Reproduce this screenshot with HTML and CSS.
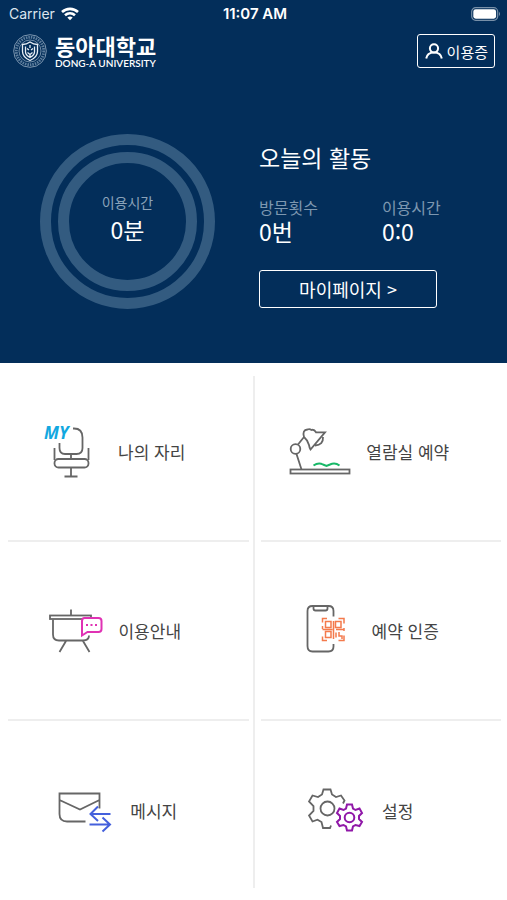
FILE: index.html
```html
<!DOCTYPE html>
<html lang="ko">
<head>
<meta charset="utf-8">
<meta name="viewport" content="width=device-width, initial-scale=1">
<title>동아대학교</title>
<link rel="stylesheet" href="styles.css">
</head>
<body>
<section class="hero">
  <div class="status">
    <div class="carrier">Carrier
      <svg width="18" height="14" viewBox="0 0 18 14" fill="none" stroke="#fff" stroke-width="2.6" aria-hidden="true">
        <path d="M1 5C5.5 .8 12.500 .8 17 5M4 8.300c3-2.700 7-2.700 10 0"/>
        <path d="M9 13.300 6.300 10.500q2.700-2 5.400 0z" fill="#fff" stroke="none"/>
      </svg>
    </div>
    <div class="clock">11:07 AM</div>
    <svg class="battery" width="30" height="14" viewBox="0 0 30 14" aria-hidden="true">
      <rect x=".7" y=".7" width="26" height="12.600" rx="4" fill="none" stroke="#7890a8" stroke-width="1.200"/>
      <rect x="2.300" y="2.300" width="22.800" height="9.400" rx="2.400" fill="#fff"/>
      <path d="M28 4.800q2 2.200 0 4.400z" fill="#7890a8"/>
    </svg>
  </div>
  <header class="header">
    <div class="brand">
      <svg width="34" height="34" viewBox="0 0 34 34" fill="none" stroke="#b9c9da" aria-hidden="true">
        <circle cx="17" cy="17" r="16.300" stroke="#8ba3ba" stroke-width=".9"/>
        <circle cx="17" cy="17" r="13.700" stroke="#5f7f9e" stroke-width="2.800" stroke-dasharray="1.500 1"/>
        <circle cx="17" cy="17" r="11" stroke="#8ba3ba" stroke-width=".8"/>
        <path d="M9.500 10.500q4 0 7.500-2.500 3.500 2.500 7.500 2.500v7q0 5.500-7.500 9-7.500-3.500-7.500-9z" stroke="#e7eef5" stroke-width="1.300"/>
        <path d="M12.500 12.500v5.500q0 3 4.500 5.500 4.500-2.500 4.500-5.500v-5.500M17 11v3M14 14.500l2 1.500M20 14.500l-2 1.500M14.500 18.500l2.500 2 2.500-2M17 20.500v3" stroke="#e7eef5" stroke-width="1.300"/>
      </svg>
      <div class="brand-name">
        <span class="brand-ko">동아대학교</span>
        <span class="brand-en">DONG-A UNIVERSITY</span>
      </div>
    </div>
    <button class="pass" type="button">
      <svg width="18" height="16" viewBox="0 0 18 16" fill="none" stroke="#fff" stroke-width="2" aria-hidden="true">
        <circle cx="9" cy="5.300" r="4.100"/>
        <path d="M1.200 15.500C1.800 11.500 4.700 9.400 9 9.400s7.200 2.100 7.800 6.100"/>
      </svg>
      이용증
    </button>
  </header>
  <div class="summary">
    <div class="ring"><div class="ring-inner">
      <span class="ring-label">이용시간</span>
      <span class="value">0분</span>
    </div></div>
    <div class="activity">
      <h1 class="title">오늘의 활동</h1>
      <dl class="stats">
        <div><dt>방문횟수</dt><dd class="value">0번</dd></div>
        <div><dt>이용시간</dt><dd class="value">0:0</dd></div>
      </dl>
      <button class="mypage" type="button">마이페이지 &gt;</button>
    </div>
  </div>
</section>
<nav class="menu">
  <div class="column">
    <a class="item" href="#seat">
      <svg width="62" height="60" viewBox="0 0 62 60" aria-hidden="true">
        <text class="my" x="1" y="17">MY</text>
        <path d="M30 6.500h1q8.500 0 8.500 9V26q0 6-6 6H22q-5.500 0-5.500-6v-5M28 32v5M11.500 26v12M45.500 26v12M28 46v8.500M21.500 54.500h13"/>
        <rect x="11.500" y="37" width="34" height="8.500" rx="4"/>
      </svg>
      나의 자리
    </a>
    <a class="item" href="#guide">
      <svg width="58" height="60" viewBox="0 0 58 60" aria-hidden="true">
        <path d="M24 8.500v6M6 18.500v15q0 6 6 6h24q6 0 6-5M19 40l-6.500 11M36 40l6.500 11"/>
        <rect x="3" y="14.500" width="41" height="3.500"/>
        <path class="pink" fill="#fff" d="M37.500 17h14q3 0 3 3v8q0 3-3 3h-11l-5.500 3.500V20q0-3 2.500-3z"/>
        <path class="pink" d="M39 24h2M43.500 24h2M48 24h2"/>
      </svg>
      이용안내
    </a>
    <a class="item" href="#messages">
      <svg width="66" height="60" viewBox="0 0 66 60" aria-hidden="true">
        <path d="M34.500 40.500H16q-7.500 0-7.500-7.500V12.500h40v15M8.500 19l20.500 9.500L48.500 19"/>
        <path class="blue" d="M59.500 33H39.500M47 25.500 39.500 33l7.500 7M38.500 43.500h20.500M51.500 36.500l7.500 7-7.500 7"/>
      </svg>
      메시지
    </a>
  </div>
  <div class="column">
    <a class="item" href="#reading-room">
      <svg width="69" height="60" viewBox="0 0 69 60" aria-hidden="true">
        <rect x="6.500" y="47.500" width="59" height="4"/>
        <circle cx="11.500" cy="27" r="4.800"/>
        <path d="M12.500 32l5 15.500M14 22.500l6-7.500M20 15q-2-7 3.500-7.500 2-1 4 .5 2.500-1 4.500 2.300h9L26.500 27.500q-1-1.500-1.500-4.500-1-4.500-5-8M39 15q.5 8-8 8.500"/>
        <path class="green" d="M29.500 43.500q5-3.500 9.500-1l3.500 1.500 3.500-1.500q5-2.500 9.500 1"/>
      </svg>
      열람실 예약
    </a>
    <a class="item" href="#check-in">
      <svg width="64" height="60" viewBox="0 0 64 60" aria-hidden="true">
        <path d="M38.500 15.500V10q0-5-5-5h-16q-5 0-5 5v35q0 5.500 5 5.500h16q5 0 5-5V43M18.500 5.500v2q0 2 2 2h10q2 0 2-2v-2"/>
        <path class="orange" d="M27.500 21.500v-4H32M43.500 17.500H49v5M27.500 35.500v4H32M43.500 39.500H49v-5"/>
        <path class="orange" d="M30.500 20.500h5.500v6h-5.500zM40.500 20.500h5.500v6h-5.500zM30.500 30.500h5.500v6h-5.500zM27.500 28.500h10M38.500 20v18M41 28.500h8M41 31.500v5M44 31v4h3v3M27.500 25v3M49 27v3"/>
      </svg>
      예약 인증
    </a>
    <a class="item item-settings" href="#settings">
      <svg width="61" height="60" viewBox="0 0 61 60" aria-hidden="true">
        <path d="M23 44.500l-1 2.500h-7l-1.500-6-4-2.300-5 1.800-3.500-6L5.500 30v-5L1 20.500l3.500-6 5.500 1.500 4-2.500L15.500 8.500h7l1.500 5 4 2.500 5-1.500 3.500 5-1.500 3"/>
        <circle cx="19.500" cy="27.500" r="7"/>
        <g class="purple">
          <path d="M39 23.500h5l1 4 2.500 1.500 4-1.500 2.500 4.500-3 3v3l3 3-2.500 4-4-1-2.500 1.500-1 4h-5l-1-4-2.500-1.500-4 1-2.500-4 3-3v-3l-3-3 2.500-4.500 4 1.500 2.500-1.500z"/>
          <circle cx="41.500" cy="36.500" r="4.800"/>
        </g>
      </svg>
      설정
    </a>
  </div>
</nav>
</body>
</html>
```

FILE: styles.css
```css
* { box-sizing: border-box; }
body {
  margin: 0;
  min-height: 100vh;
  display: flex;
  flex-direction: column;
  background: #fff;
  color: #444;
  font-family: "Noto Sans CJK KR", "Noto Sans", sans-serif;
}
button { font: inherit; color: #fff; background: none; border: 1px solid #fff; border-radius: 3px; cursor: pointer; }
.hero { background: #032e5a; color: #fff; padding-bottom: 54px; }
.status {
  display: grid;
  grid-template-columns: 1fr auto 1fr;
  align-items: center;
  height: 28px;
  padding: 0 6px 0 9px;
  font: 14px/20px Inter, sans-serif;
}
.carrier { display: flex; align-items: center; gap: 6px; color: #dce5ee; }
.clock { font-size: 15px; font-weight: 600; }
.battery { justify-self: end; }
.header { display: flex; justify-content: space-between; align-items: center; padding: 5px 12px 0 13px; }
.brand { display: flex; align-items: center; gap: 8px; }
.brand-name { display: flex; flex-direction: column; }
.brand-ko { font-size: 22px; font-weight: 700; line-height: 24px; }
.brand-en { font: 600 10px/12px Lato, sans-serif; }
.pass {
  display: flex;
  align-items: center;
  gap: 4px;
  height: 34px;
  padding: 0 6px 0 7px;
  font-size: 15px;
}
.summary { display: flex; padding: 65px 40px 0; gap: 44px; }
.ring { width: 175px; height: 175px; flex: none; padding: 7px; border: 11px solid #335b80; border-radius: 50%; }
.ring-inner {
  height: 100%;
  padding-bottom: 14px;
  border: 11px solid #335b80;
  border-radius: 50%;
  display: flex;
  flex-direction: column;
  align-items: center;
  justify-content: center;
}
.ring-label { font-size: 14px; line-height: 28px; color: #8ba3ba; }
.value { font-size: 23px; line-height: 26px; }
.activity { padding-top: 6px; }
.title { margin: 0; font-size: 23px; font-weight: 400; line-height: 34px; }
.stats { display: grid; grid-template-columns: 1fr 1fr; gap: 64px; margin: 22px 0 26px; }
dt { font-size: 16px; line-height: 22px; color: #7d97b0; white-space: nowrap; }
dd { margin: 0; }
.mypage { width: 178px; height: 38px; padding: 0; font-size: 18px; line-height: 24px; }
.menu {
  flex: 1;
  display: grid;
  grid-template-columns: 1fr 1fr;
  gap: 12px;
  padding: 0 6px 0 8px;
  background: linear-gradient(#eee, #eee) center 13px / 2px calc(100% - 25px) no-repeat;
}
.column { display: grid; grid-template-rows: repeat(3, 1fr); }
.item {
  display: flex;
  align-items: center;
  justify-content: center;
  gap: 13px;
  padding-right: 28px;
  border-bottom: 2px solid #eee;
  color: #444;
  font-size: 17px;
  text-decoration: none;
}
.item:last-child { border-bottom: 0; }
.item-settings { padding-right: 40px; }
.item svg { fill: none; stroke: #666; stroke-width: 1.8; flex: none; }
.item .my { font: italic 700 17px "Noto Sans", sans-serif; fill: #12a8e0; stroke: none; }
.item .pink { stroke: #e032b4; stroke-width: 2; }
.item .blue { stroke: #4460dc; stroke-width: 2; }
.item .green { stroke: #18b868; stroke-width: 2; }
.item .orange { stroke: #f47a4c; stroke-width: 1.5; }
.item .purple { stroke: #9018a8; stroke-width: 2; }
```
